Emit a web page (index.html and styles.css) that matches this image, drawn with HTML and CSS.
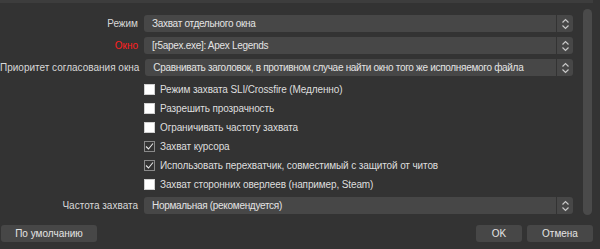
FILE: index.html
```html
<!DOCTYPE html>
<html lang="ru">
<head>
<meta charset="utf-8">
<link rel="stylesheet" href="styles.css">
</head>
<body>
<div class="topstrip"></div>
<div class="scrollarea">
  <div class="form">
    <div class="row">
      <div class="label">Режим</div>
      <div class="combo"><div class="combo-text">Захват отдельного окна</div><div class="combo-arrow"><svg width="9" height="12" viewBox="0 0 9 12"><path d="M1.5 4.5 L4.5 1.5 L7.5 4.5 M1.5 7.5 L4.5 10.5 L7.5 7.5" fill="none" stroke="#c8c8c8" stroke-width="1.2"/></svg></div></div>
    </div>
    <div class="row">
      <div class="label red">Окно</div>
      <div class="combo"><div class="combo-text">[r5apex.exe]: Apex Legends</div><div class="combo-arrow"><svg width="9" height="12" viewBox="0 0 9 12"><path d="M1.5 4.5 L4.5 1.5 L7.5 4.5 M1.5 7.5 L4.5 10.5 L7.5 7.5" fill="none" stroke="#c8c8c8" stroke-width="1.2"/></svg></div></div>
    </div>
    <div class="row">
      <div class="label">Приоритет согласования окна</div>
      <div class="combo"><div class="combo-text">Сравнивать заголовок, в противном случае найти окно того же исполняемого файла</div><div class="combo-arrow"><svg width="9" height="12" viewBox="0 0 9 12"><path d="M1.5 4.5 L4.5 1.5 L7.5 4.5 M1.5 7.5 L4.5 10.5 L7.5 7.5" fill="none" stroke="#c8c8c8" stroke-width="1.2"/></svg></div></div>
    </div>
    <div class="checks">
      <div class="check"><span class="box"></span>Режим захвата SLI/Crossfire (Медленно)</div>
      <div class="check"><span class="box"></span>Разрешить прозрачность</div>
      <div class="check"><span class="box"></span>Ограничивать частоту захвата</div>
      <div class="check"><span class="box checked"><svg width="9" height="9" viewBox="0 0 9 9"><path d="M1 4.5 L3.5 7 L8 1.5" fill="none" stroke="#e8e8e8" stroke-width="1.1"/></svg></span>Захват курсора</div>
      <div class="check"><span class="box checked"><svg width="9" height="9" viewBox="0 0 9 9"><path d="M1 4.5 L3.5 7 L8 1.5" fill="none" stroke="#e8e8e8" stroke-width="1.1"/></svg></span>Использовать перехватчик, совместимый с защитой от читов</div>
      <div class="check"><span class="box"></span>Захват сторонних оверлеев (например, Steam)</div>
    </div>
    <div class="row">
      <div class="label">Частота захвата</div>
      <div class="combo"><div class="combo-text">Нормальная (рекомендуется)</div><div class="combo-arrow"><svg width="9" height="12" viewBox="0 0 9 12"><path d="M1.5 4.5 L4.5 1.5 L7.5 4.5 M1.5 7.5 L4.5 10.5 L7.5 7.5" fill="none" stroke="#c8c8c8" stroke-width="1.2"/></svg></div></div>
    </div>
  </div>
  <div class="scrollbar"></div>
</div>
<div class="buttons">
  <button class="btn btn-default">По умолчанию</button>
  <div class="spacer"></div>
  <button class="btn btn-ok">OK</button>
  <button class="btn btn-cancel">Отмена</button>
</div>
</body>
</html>
```
FILE: styles.css
```css
html, body {
  margin: 0;
  padding: 0;
  background: #333333;
  width: 600px;
  height: 249px;
  overflow: hidden;
  font-family: "Liberation Sans", Arial, sans-serif;
  font-size: 10px;
  color: #dedede;
}
.topstrip {
  width: 593px;
  height: 3px;
  background: #3d3d3d;
}
.scrollarea {
  display: flex;
  height: 218px;
}
.form {
  width: 573px;
  padding-top: 12px;
  display: flex;
  flex-direction: column;
}
.row {
  display: flex;
  align-items: center;
  height: 17px;
  margin-bottom: 5px;
}
.label {
  flex: 0 0 138px;
  white-space: nowrap;
  margin-right: 6px;
  color: #d8d8d8;
  display: flex;
  justify-content: flex-end;
}
.red { color: #ff2020; }
.combo {
  flex: 1;
  min-width: 0;
  display: flex;
  height: 17px;
  gap: 1px;
}
.combo-text {
  flex: 1;
  min-width: 0;
  background: #474747;
  border-radius: 3px 0 0 3px;
  padding-left: 8px;
  display: flex;
  align-items: center;
  white-space: nowrap;
  overflow: hidden;
  color: #e4e4e4;
  letter-spacing: -0.3px;
}
.combo-arrow {
  flex: 0 0 16px;
  background: #474747;
  border-radius: 0 3px 3px 0;
  display: flex;
  align-items: center;
  justify-content: center;
}
.checks {
  margin-top: -1px;
  margin-bottom: 3px;
  padding-left: 144px;
  display: flex;
  flex-direction: column;
}
.check {
  height: 19px;
  display: flex;
  align-items: center;
  white-space: nowrap;
  color: #dedede;
  letter-spacing: -0.12px;
}
.box {
  width: 9px;
  height: 9px;
  border: 1px solid #d0d0d0;
  background: #ffffff;
  margin-right: 5px;
  display: flex;
  align-items: center;
  justify-content: center;
}
.box.checked {
  background: #333333;
  border-color: #8a8a8a;
}
.scrollbar {
  margin-left: 10px;
  margin-top: 6px;
  width: 9px;
  height: 206px;
  background: #4a4a4a;
  border-radius: 5px;
}
.buttons {
  display: flex;
  margin-top: 4px;
  padding-left: 1px;
  width: 592px;
}
.spacer { flex: 1; }
.btn {
  height: 17px;
  border: none;
  border-radius: 3px;
  background: #474747;
  color: #e4e4e4;
  font-family: "Liberation Sans", Arial, sans-serif;
  font-size: 10px;
  padding: 0;
}
.btn-default { width: 96px; }
.btn-ok { width: 46px; margin-right: 5px; }
.btn-cancel { width: 66px; }
```
